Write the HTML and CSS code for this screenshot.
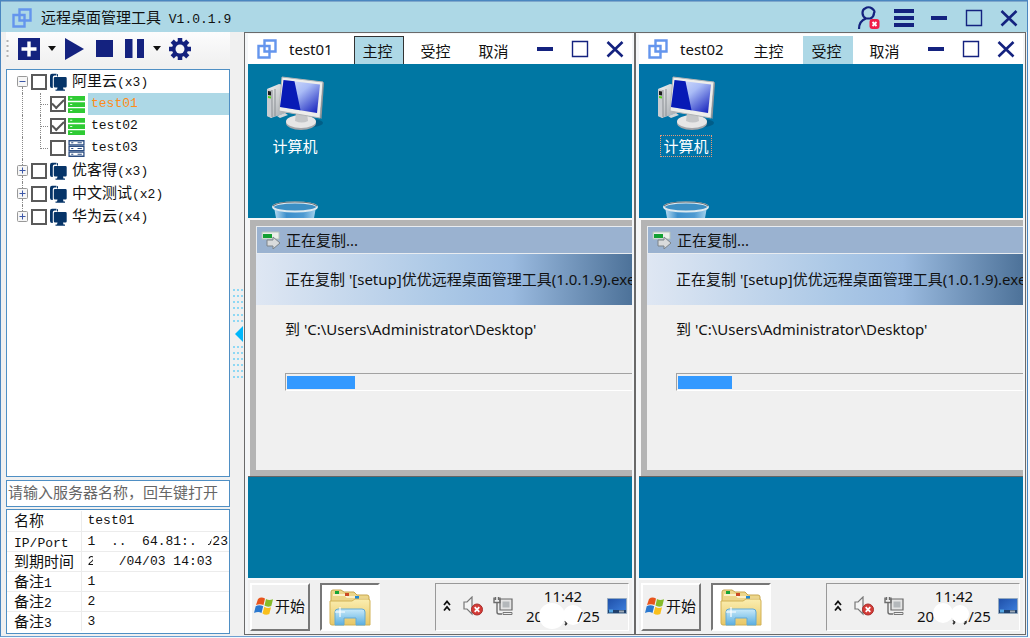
FILE: index.html
```
<!DOCTYPE html>
<html lang="zh-CN">
<head>
    <meta charset="UTF-8">
    <meta name="viewport" content="width=device-width, initial-scale=1.0">
    <title>远程桌面管理工具</title>
    <link rel="stylesheet" href="styles.css">
</head>
<body>
    <!-- Shared icons -->
    <svg class="sprite" aria-hidden="true">
        <defs>
            <linearGradient id="g-screen" x1="0" y1="0" x2="1" y2="1">
                <stop offset="0" stop-color="#e4ecff"/><stop offset=".45" stop-color="#a9bbf6"/><stop offset="1" stop-color="#0a16b8"/>
            </linearGradient>
            <linearGradient id="g-case" x1="0" y1="0" x2="1" y2="1">
                <stop offset="0" stop-color="#f4f4f4"/><stop offset="1" stop-color="#9aa0a6"/>
            </linearGradient>
            <linearGradient id="g-folder" x1="0" y1="0" x2="0" y2="1">
                <stop offset="0" stop-color="#fbeeb0"/><stop offset="1" stop-color="#e8c766"/>
            </linearGradient>
            <linearGradient id="g-tray" x1="0" y1="0" x2="0" y2="1">
                <stop offset="0" stop-color="#c9eafa"/><stop offset="1" stop-color="#5aaee0"/>
            </linearGradient>
            <linearGradient id="g-bin" x1="0" y1="0" x2="1" y2="0">
                <stop offset="0" stop-color="#b8dcf2"/><stop offset=".3" stop-color="#3c8fcb"/><stop offset=".7" stop-color="#4d9ad2"/><stop offset="1" stop-color="#a5d2ec"/>
            </linearGradient>
            <linearGradient id="g-blue" x1="0" y1="0" x2="1" y2="1">
                <stop offset="0" stop-color="#1f4fa8"/><stop offset="1" stop-color="#3f83e0"/>
            </linearGradient>
        </defs>
        <symbol id="i-logo" viewBox="0 0 20 20">
            <path d="M7.5 1.5h11v11h-11zM1.500 7h11v11.500h-11z" fill="none" stroke="#6495ed" stroke-width="2.4"/>
        </symbol>
        <symbol id="i-min" viewBox="0 0 18 18"><path d="M1 7h16v4H1z" fill="#14227f"/></symbol>
        <symbol id="i-max" viewBox="0 0 18 18"><path d="M1.5 1.5h15v15h-15z" fill="none" stroke="#14227f" stroke-width="1.4"/></symbol>
        <symbol id="i-close" viewBox="0 0 18 18"><path d="M1.5 2l15 14.5M16.5 2l-15 14.5" stroke="#14227f" stroke-width="2.6"/></symbol>
        <symbol id="i-caret" viewBox="0 0 8 5"><path d="M0 0h8L4 5z" fill="#111"/></symbol>
        <symbol id="i-plus-box" viewBox="0 0 11 11">
            <rect x=".5" y=".5" width="10" height="10" rx="1" fill="#f6f6f6" stroke="#989898"/>
            <path d="M2.5 5.5h6M5.5 2.5v6" stroke="#3d58a8"/>
        </symbol>
        <symbol id="i-minus-box" viewBox="0 0 11 11">
            <rect x=".5" y=".5" width="10" height="10" rx="1" fill="#f6f6f6" stroke="#989898"/>
            <path d="M2.5 5.5h6" stroke="#3d58a8"/>
        </symbol>
        <symbol id="i-group" viewBox="0 0 18 18">
            <path d="M1 3Q1 .8 3 .8h4.500v1.700H5.500Q3.800 2.500 3.800 4.500V15H3Q1 15 1 13z" fill="#063468"/>
            <path d="M8.500 1.200v2.300" stroke="#063468"/>
            <path d="M6 4h10.500q1.200 0 1.200 1.200v8q0 1.200-1.200 1.200H14l.5 2H16v1.300H6.500v-1.300H8l.5-2H6q-1.200 0-1.200-1.200v-8Q4.800 4 6 4z" fill="#063468"/>
        </symbol>
        <symbol id="i-on" viewBox="0 0 16 16">
            <path d="M0 0h16v4.500H0zM0 5.800h16v4.500H0zM0 11.500h16V16H0z" fill="#2fcb34"/>
            <path d="M2 2.200h2M2 8h2M2 13.700h2" stroke="#e4ffe4"/>
        </symbol>
        <symbol id="i-off" viewBox="0 0 16 16">
            <path d="M1 .7h14v3.800H1zM1 6.100h14v3.800H1zM1 11.500h14v3.800H1z" fill="#fff" stroke="#2b4d82" stroke-width="1.200"/>
            <path d="M3 2.600h2M9 2.600h4M3 8h2M9 8h4M3 13.400h2M9 13.400h4" stroke="#2b4d82"/>
        </symbol>
        <symbol id="i-computer" viewBox="0 0 60 56">
            <ellipse cx="46" cy="47" rx="12" ry="4" fill="#004f74" opacity=".6"/>
            <path d="M2 13l12-5 10 2v26L6 42l-4-2z" fill="url(#g-case)"/>
            <path d="M2 13l5 1v28l-5-2z" fill="#c9ccd0"/>
            <path d="M7 14v27M10 13v27" stroke="#8a8f94"/>
            <path d="M3 15l3 .5v4L3 19z" fill="#1c1c1c"/>
            <path d="M3 20l3 .5v2L3 22z" fill="#58d31c"/>
            <path d="M12 40l8-3 3 2-8 3z" fill="#d4d6d8"/>
            <ellipse cx="36" cy="47" rx="15" ry="7" fill="#a3a6aa"/>
            <ellipse cx="36" cy="45.500" rx="15" ry="6.500" fill="#e6e6e6"/>
            <path d="M31 37h11l1 8q-6 3-13 0z" fill="#c4c6c8"/>
            <path d="M17 1l41 5-3 36-41-7z" fill="#ededeb" stroke="#b2b4b6"/>
            <path d="M18.500 4l36.500 4.500-3 28.500L15 31z" fill="url(#g-screen)"/>
            <path d="M18.500 4l11 1.300 6 29L15 31z" fill="#071ab6"/>
            <path d="M55 42l3-36 1 1-2.500 36z" fill="#8f9498"/>
        </symbol>
        <symbol id="i-bin" viewBox="0 0 48 17">
            <path d="M3 6h42l-2 11H5z" fill="url(#g-bin)"/>
            <ellipse cx="24" cy="6" rx="22" ry="4.500" fill="#3c8fc4" stroke="#dce9f0" stroke-width="2"/>
            <path d="M2 5q4-4 22-4t22 4" fill="none" stroke="#6c7479" stroke-width="1.200"/>
        </symbol>
        <symbol id="i-copy" viewBox="0 0 20 18">
            <path d="M1 1h17v7H1z" fill="#e9efe9" stroke="#b5c4ba"/>
            <path d="M2 3h9v4H2z" fill="#12a032"/>
            <path d="M6 9h6V6l7 6-7 6v-3H6z" fill="#d9dbdc" stroke="#7c8388"/>
        </symbol>
        <symbol id="i-win" viewBox="0 0 20 18">
            <path d="M4 2q3-2.500 7-.5L9.500 8Q6 6.300 2 8z" fill="#e8541c"/>
            <path d="M12 2q3 2 7 .3L17.300 9Q13.500 10.500 10.500 8.500z" fill="#86bb28"/>
            <path d="M1.700 9.200q3.500-1.800 7.500 0L7.500 16Q4.500 14 0 16z" fill="#2a78cf"/>
            <path d="M10.300 9.700q3.200 2 6.700.6L15.300 17q-3.500 1.600-6.800-.5z" fill="#f9bf1c"/>
        </symbol>
        <symbol id="i-folder" viewBox="0 0 42 38">
            <path d="M2 36V4q0-2 2-2h8l3 2h10l3 3h10q2 0 2 2v27z" fill="#ecd68a" stroke="#c8a750"/>
            <path d="M4 7h12l2 2h10l2 2h9" fill="none" stroke="#fff9dd" stroke-width="1.500"/>
            <path d="M6 3h4v3H6z" fill="#17a437"/><path d="M16 5h4v3h-4z" fill="#cc4a25"/><path d="M26 8h4v3h-4z" fill="#1f87d2"/>
            <path d="M1 13h22l3-2h13q2 0 2 2v24H3q-2 0-2-2z" fill="url(#g-folder)" stroke="#d2b155"/>
            <path d="M6 37V24q0-3 3-3h24q3 0 3 3v13h-9v-7H15v7z" fill="url(#g-tray)" stroke="#62aad6"/>
            <path d="M11 19v10M6 24h10" stroke="#fff" stroke-width="1.200"/>
        </symbol>
        <symbol id="i-up" viewBox="0 0 8 12"><path d="M1 5l3-3.500L7 5M1 10.500L4 7l3 3.500" fill="none" stroke="#111" stroke-width="1.800"/></symbol>
        <symbol id="i-sound" viewBox="0 0 20 20">
            <path d="M1 6h3l5-5v17l-5-5H1z" fill="#f4f4f4" stroke="#777" stroke-width="1.200"/>
            <circle cx="14" cy="13.500" r="5.500" fill="#d43c38" stroke="#a82f2c"/>
            <path d="M11.700 11.200l4.600 4.600m0-4.600l-4.600 4.600" stroke="#fff" stroke-width="1.800"/>
        </symbol>
        <symbol id="i-net" viewBox="0 0 20 20">
            <path d="M7 3h12v11H7z" fill="#e4e4e4" stroke="#686868" stroke-width="1.200"/>
            <path d="M9.500 5.500h7v6h-7z" fill="#b4b8bb"/>
            <path d="M10 16.500h9v2h-9z" fill="#eee" stroke="#777"/>
            <path d="M1 1.500v5h6v-5M2.500 1v3M5.500 1v3M4 6.500V16q0 2 2 2h3" fill="none" stroke="#6c6c6c" stroke-width="1.400"/>
        </symbol>
        <symbol id="i-show" viewBox="0 0 20 16">
            <path d="M.5.5h19v15H.5z" fill="url(#g-blue)" stroke="#93a9bf"/>
            <path d="M1 12h18v3H1z" fill="#20406c"/>
            <path d="M2 11.500h4v3H2z" fill="#55a7e4"/><path d="M12 12.500h5v2h-5z" fill="#9faab5"/>
        </symbol>
    </svg>

    <div class="window">
        <header class="titlebar">
            <svg class="logo"><use href="#i-logo"/></svg>
            <h1 class="app-name">远程桌面管理工具<span class="mono"> V1.0.1.9</span></h1>
            <div class="title-buttons">
                <button class="icon-btn" aria-label="用户">
                    <svg width="24" height="24" viewBox="0 0 24 24">
                        <path d="M2 23q0-8 7-10.500Q5.500 10.500 5.500 7T8 2.500Q11.500 0 15 2.500T17 7q0 3.500-3.500 5.500H9" fill="none" stroke="#14227f" stroke-width="2.200"/>
                        <rect x="12.500" y="13" width="10" height="10" rx="3" fill="#f01e48"/>
                        <path d="M15.500 16l4 4m0-4l-4 4" stroke="#fff" stroke-width="1.800"/>
                    </svg>
                </button>
                <button class="icon-btn" aria-label="菜单">
                    <svg width="20" height="18" viewBox="0 0 20 18"><path d="M0 0h20v4H0zM0 7h20v4H0zM0 14h20v4H0z" fill="#14227f"/></svg>
                </button>
                <button class="icon-btn" aria-label="最小化"><svg class="glyph"><use href="#i-min"/></svg></button>
                <button class="icon-btn" aria-label="最大化"><svg class="glyph"><use href="#i-max"/></svg></button>
                <button class="icon-btn" aria-label="关闭"><svg class="glyph"><use href="#i-close"/></svg></button>
            </div>
        </header>

        <div class="main">
            <aside class="sidebar">
                <div class="toolbar">
                    <svg width="3" height="20" viewBox="0 0 3 20"><path d="M1.500 1v18" stroke="#b2b2b2" stroke-width="2" stroke-dasharray="2 3"/></svg>
                    <button class="tool tool-add" aria-label="添加">
                        <svg width="22" height="22" viewBox="0 0 22 22"><path d="M0 0h22v22H0z" fill="#14227f"/><path d="M11 3.500v15M3.500 11h15" stroke="#fff" stroke-width="3.400"/></svg>
                    </button>
                    <button class="tool" aria-label="更多添加"><svg class="caret"><use href="#i-caret"/></svg></button>
                    <button class="tool tool-add" aria-label="启动">
                        <svg width="19" height="22" viewBox="0 0 19 22"><path d="M0 0l19 11L0 22z" fill="#14227f"/></svg>
                    </button>
                    <button class="tool tool-stop" aria-label="停止">
                        <svg width="17" height="17" viewBox="0 0 17 17"><path d="M0 0h17v17H0z" fill="#14227f"/></svg>
                    </button>
                    <button class="tool tool-stop" aria-label="暂停">
                        <svg width="19" height="19" viewBox="0 0 19 19"><path d="M0 0h7.500v19H0zM12 0h7v19h-7z" fill="#14227f"/></svg>
                    </button>
                    <button class="tool tool-add" aria-label="更多暂停"><svg class="caret"><use href="#i-caret"/></svg></button>
                    <button class="tool" aria-label="设置">
                        <svg width="22" height="22" viewBox="0 0 22 22">
                            <g stroke="#14227f" stroke-width="4.500"><path d="M11 0v22M0 11h22M3.200 3.200l15.600 15.600M18.800 3.200L3.200 18.800"/></g>
                            <circle cx="11" cy="11" r="8" fill="#14227f"/><circle cx="11" cy="11" r="4.500" fill="#f7f7f8"/>
                        </svg>
                    </button>
                </div>

                <ul class="tree">
                    <li class="row">
                        <button class="expander stem-down" aria-label="折叠"><svg class="box"><use href="#i-minus-box"/></svg></button>
                        <label class="node"><input type="checkbox"><svg class="group"><use href="#i-group"/></svg><span class="text">阿里云<span class="mono">(x3)</span></span></label>
                    </li>
                    <li class="row child">
                        <span class="stem"></span><span class="branch"></span>
                        <label class="node"><input type="checkbox" checked><svg class="server"><use href="#i-on"/></svg><span class="text mono selected">test01</span></label>
                    </li>
                    <li class="row child">
                        <span class="stem"></span><span class="branch"></span>
                        <label class="node"><input type="checkbox" checked><svg class="server"><use href="#i-on"/></svg><span class="text mono">test02</span></label>
                    </li>
                    <li class="row child last">
                        <span class="stem"></span><span class="branch"></span>
                        <label class="node"><input type="checkbox"><svg class="server"><use href="#i-off"/></svg><span class="text mono">test03</span></label>
                    </li>
                    <li class="row">
                        <button class="expander stem-up stem-down" aria-label="展开"><svg class="box"><use href="#i-plus-box"/></svg></button>
                        <label class="node"><input type="checkbox"><svg class="group"><use href="#i-group"/></svg><span class="text">优客得<span class="mono">(x3)</span></span></label>
                    </li>
                    <li class="row">
                        <button class="expander stem-up stem-down" aria-label="展开"><svg class="box"><use href="#i-plus-box"/></svg></button>
                        <label class="node"><input type="checkbox"><svg class="group"><use href="#i-group"/></svg><span class="text">中文测试<span class="mono">(x2)</span></span></label>
                    </li>
                    <li class="row">
                        <button class="expander stem-up" aria-label="展开"><svg class="box"><use href="#i-plus-box"/></svg></button>
                        <label class="node"><input type="checkbox"><svg class="group"><use href="#i-group"/></svg><span class="text">华为云<span class="mono">(x4)</span></span></label>
                    </li>
                </ul>

                <input class="search" type="text" aria-label="服务器名称" placeholder="请输入服务器名称，回车键打开">

                <div class="details">
                    <table>
                        <tr><th scope="row">名称</th><td>test01</td></tr>
                        <tr><th scope="row"><span class="mono">IP/Port</span></th><td>1  ..  64.81:. <span class="cut">9</span>23</td></tr>
                        <tr><th scope="row">到期时间</th><td><span class="cut-right">2</span>   /04/03 14:03</td></tr>
                        <tr><th scope="row">备注<span class="mono">1</span></th><td>1</td></tr>
                        <tr><th scope="row">备注<span class="mono">2</span></th><td>2</td></tr>
                        <tr><th scope="row">备注<span class="mono">3</span></th><td>3</td></tr>
                    </table>
                </div>
            </aside>

            <button class="splitter" aria-label="收起侧栏">
                <svg width="11" height="90" viewBox="0 0 11 90">
                    <g stroke="#6fd0f5" stroke-width="1.500" stroke-dasharray="2 2">
                        <path d="M0 1h10M0 7h10M0 13h10M0 19h10M0 26h10M0 32h10M0 58h10M0 64h10M0 70h10M0 76h10M0 82h10M0 88h10"/>
                    </g>
                    <path d="M2 45l8-8v16z" fill="#00b7fb"/>
                </svg>
            </button>

            <section class="panel">
                <div class="panel-head">
                    <svg class="logo"><use href="#i-logo"/></svg>
                    <h2 class="panel-name">test01</h2>
                    <div class="tabs">
                        <button class="tab active focused">主控</button>
                        <button class="tab">受控</button>
                        <button class="tab">取消</button>
                    </div>
                    <div class="panel-buttons">
                        <button class="icon-btn" aria-label="最小化"><svg class="glyph"><use href="#i-min"/></svg></button>
                        <button class="icon-btn" aria-label="最大化"><svg class="glyph"><use href="#i-max"/></svg></button>
                        <button class="icon-btn" aria-label="关闭"><svg class="glyph"><use href="#i-close"/></svg></button>
                    </div>
                </div>
                <div class="desktop">
                    <div class="desk-icons">
                        <svg class="computer"><use href="#i-computer"/></svg>
                        <span class="desk-label">计算机</span>
                        <svg class="bin"><use href="#i-bin"/></svg>
                    </div>
                    <div class="dialog">
                        <div class="dialog-inner">
                            <div class="dialog-title"><svg class="copy"><use href="#i-copy"/></svg>正在复制...</div>
                            <p class="dialog-file">正在复制 '[setup]优优远程桌面管理工具(1.0.1.9).exe'</p>
                            <div class="dialog-body">
                                <p class="dialog-path">到 'C:\Users\Administrator\Desktop'</p>
                                <div class="progress" role="progressbar" aria-label="复制进度"><div class="bar" style="width: 68px"></div></div>
                            </div>
                        </div>
                    </div>
                    <div class="taskbar">
                        <button class="start"><svg class="win"><use href="#i-win"/></svg>开始</button>
                        <button class="task" aria-label="文件夹"><svg class="folder"><use href="#i-folder"/></svg></button>
                        <div class="tray">
                            <svg class="up"><use href="#i-up"/></svg>
                            <svg class="tray-icon"><use href="#i-sound"/></svg>
                            <svg class="tray-icon net"><use href="#i-net"/></svg>
                            <div class="clock">
                                <span>11:42</span>
                                <span class="date">20<svg class="blot" viewBox="0 0 44 28"><path d="M27 19q3 2 0 4" fill="none" stroke="#333" stroke-width="2"/><circle cx="14" cy="14" r="13" fill="#fff"/><circle cx="35" cy="13" r="10" fill="#fff"/></svg>/25</span>
                            </div>
                            <svg class="show"><use href="#i-show"/></svg>
                        </div>
                    </div>
                </div>
            </section>

            <section class="panel alt">
                <div class="panel-head">
                    <svg class="logo"><use href="#i-logo"/></svg>
                    <h2 class="panel-name">test02</h2>
                    <div class="tabs">
                        <button class="tab">主控</button>
                        <button class="tab active">受控</button>
                        <button class="tab">取消</button>
                    </div>
                    <div class="panel-buttons">
                        <button class="icon-btn" aria-label="最小化"><svg class="glyph"><use href="#i-min"/></svg></button>
                        <button class="icon-btn" aria-label="最大化"><svg class="glyph"><use href="#i-max"/></svg></button>
                        <button class="icon-btn" aria-label="关闭"><svg class="glyph"><use href="#i-close"/></svg></button>
                    </div>
                </div>
                <div class="desktop">
                    <div class="desk-icons">
                        <svg class="computer"><use href="#i-computer"/></svg>
                        <span class="desk-label picked">计算机</span>
                        <svg class="bin"><use href="#i-bin"/></svg>
                    </div>
                    <div class="dialog">
                        <div class="dialog-inner">
                            <div class="dialog-title"><svg class="copy"><use href="#i-copy"/></svg>正在复制...</div>
                            <p class="dialog-file">正在复制 '[setup]优优远程桌面管理工具(1.0.1.9).exe'</p>
                            <div class="dialog-body">
                                <p class="dialog-path">到 'C:\Users\Administrator\Desktop'</p>
                                <div class="progress" role="progressbar" aria-label="复制进度"><div class="bar" style="width: 54px"></div></div>
                            </div>
                        </div>
                    </div>
                    <div class="taskbar">
                        <button class="start"><svg class="win"><use href="#i-win"/></svg>开始</button>
                        <button class="task" aria-label="文件夹"><svg class="folder"><use href="#i-folder"/></svg></button>
                        <div class="tray">
                            <svg class="up"><use href="#i-up"/></svg>
                            <svg class="tray-icon"><use href="#i-sound"/></svg>
                            <svg class="tray-icon net"><use href="#i-net"/></svg>
                            <div class="clock">
                                <span>11:42</span>
                                <span class="date">20<svg class="blot" viewBox="0 0 44 28"><path d="M24 18q3 2 0 4M35 18q4 2 0 4" fill="none" stroke="#333" stroke-width="2"/><circle cx="14" cy="11" r="10" fill="#fff"/><circle cx="31" cy="12" r="9" fill="#fff"/></svg>/25</span>
                            </div>
                            <svg class="show"><use href="#i-show"/></svg>
                        </div>
                    </div>
                </div>
            </section>
        </div>
    </div>
</body>
</html>
```
FILE: styles.css
```
* {
    box-sizing: border-box;
}
body {
    margin: 0;
    padding: 0 2px 1px 0;
    height: 100vh;
    background: #f4f8fc;
    color: #111;
    font-family: "Noto Sans", "Noto Sans CJK SC", sans-serif;
    font-size: 15px;
    line-height: 20px;
}
button {
    margin: 0;
    padding: 0;
    border: 0;
    background: none;
    color: inherit;
    font: inherit;
    cursor: pointer;
}
svg {
    display: block;
    flex: none;
}
h1, h2, p, ul {
    margin: 0;
    padding: 0;
    font-size: 15px;
    font-weight: 400;
}
.sprite {
    position: absolute;
    width: 0;
    height: 0;
}
.mono {
    font-family: "Liberation Mono", "Noto Sans CJK SC", monospace;
    font-size: 13px;
}

.window {
    height: 100%;
    display: flex;
    flex-direction: column;
    background: #f0f0f0;
    border: 1px solid #4a86c0;
    border-bottom-color: #6d9fd0;
}

/* Title bar */
.titlebar {
    flex: none;
    height: 31px;
    display: flex;
    align-items: center;
    padding: 2px 1px 0 11px;
    background: #add8e6;
    border-top: 1px solid #7fa8cc;
}
.logo {
    width: 20px;
    height: 20px;
}
.app-name {
    margin-left: 9px;
    white-space: nowrap;
}
.title-buttons {
    margin-left: auto;
    display: flex;
    align-items: center;
}
.icon-btn {
    width: 35px;
    height: 26px;
    display: flex;
    align-items: center;
    justify-content: center;
}
.glyph {
    width: 18px;
    height: 18px;
}

.main {
    flex: 1;
    min-height: 0;
    display: flex;
    padding: 0 1px 1px 0;
}

/* Sidebar */
.sidebar {
    flex: none;
    width: 229px;
    display: flex;
    flex-direction: column;
    padding: 0 0 1px 5px;
}
.toolbar {
    height: 33px;
    margin-bottom: 4px;
    display: flex;
    align-items: center;
    background: linear-gradient(#fcfcfd, #f0f0f0);
}
.tool {
    margin-left: 8px;
}
.tool-add {
    margin-left: 9px;
}
.tool-stop {
    margin-left: 12px;
}
.caret {
    width: 8px;
    height: 5px;
}
.tree,
.search,
.details {
    background: #fff;
    border: 1px solid #4f8fc4;
}
.tree {
    flex: 1;
    list-style: none;
    overflow: hidden;
}
.row {
    height: 23px;
    display: flex;
}
.child {
    height: 22px;
}
.node {
    flex: 1;
    display: flex;
    align-items: center;
}
.expander {
    width: 24px;
    display: flex;
    flex-direction: column;
    align-items: center;
    padding-left: 7px;
}
.expander::before,
.expander::after {
    content: "";
    flex: 1;
    border-left: 1px dotted transparent;
}
.stem-up::before,
.stem-down::after {
    border-left-color: #888;
}
.box {
    width: 11px;
    height: 11px;
}
.stem {
    width: 18px;
    margin-left: 15px;
    border-left: 1px dotted #888;
}
.branch {
    width: 9px;
    margin-right: 1px;
    border-left: 1px dotted #888;
    background: linear-gradient(90deg, #888 50%, transparent 50%) 0 11px / 2px 1px repeat-x;
}
.last .branch {
    height: 12px;
}
.row input {
    appearance: none;
    flex: none;
    width: 16px;
    height: 16px;
    margin: 0 2px 0 0;
    border: 2px solid #5a5a5a;
    background: #fff;
    display: grid;
    place-items: center;
}
.row input:checked::before {
    content: "";
    width: 10px;
    height: 5px;
    border: solid #555;
    border-width: 0 0 2px 2px;
    transform: rotate(-45deg);
    margin-bottom: 3px;
}
.group {
    width: 18px;
    height: 18px;
}
.server {
    width: 17px;
    height: 17px;
    margin-right: 3px;
}
.text {
    flex: 1;
    padding-left: 5px;
    line-height: 22px;
}
.child .text {
    padding-left: 3px;
}
.selected {
    background: #add8e6;
    color: #ff8c1a;
}
.search {
    height: 27px;
    margin: 3px 0 2px;
    padding: 0 1px 4px;
    font: inherit;
    outline: 0;
}
.search::placeholder {
    color: #666;
    opacity: 1;
}
.details {
    padding: 1px 0 2px;
}
.details table {
    width: 100%;
    border-collapse: collapse;
    table-layout: fixed;
}
.details th,
.details td {
    height: 20px;
    padding: 0 0 0 7px;
    border-bottom: 1px solid #ececec;
    font-weight: 400;
    line-height: 19px;
    text-align: left;
    vertical-align: top;
    white-space: pre;
}
.details th {
    width: 74px;
    border-right: 1px solid #ececec;
}
.details td {
    font-family: "Liberation Mono", monospace;
    font-size: 13px;
    padding-left: 6px;
}
.details .mono {
    line-height: 1;
}
.details tr:last-child > * {
    border-bottom: 0;
}
/* Partly masked digits */
.cut {
    background: linear-gradient(120deg, transparent 60%, #111 60%);
    background-clip: text;
    color: transparent;
}
.cut-right {
    background: linear-gradient(90deg, #111 65%, transparent 65%);
    background-clip: text;
    color: transparent;
}
.splitter {
    flex: none;
    width: 14px;
    display: flex;
    align-items: center;
    justify-content: flex-end;
}

/* Remote session panels */
.panel {
    flex: 1;
    min-width: 0;
    display: flex;
    flex-direction: column;
    border: 1px solid #6a6a6a;
    padding: 1px 2px 0 3px;
    background: #f4f6f8;
}
.panel-head {
    height: 30px;
    display: flex;
    align-items: center;
    padding: 0 0 0 9px;
    background: #fff;
}
.panel-name {
    width: 65px;
    margin-left: 12px;
}
.tabs {
    display: flex;
    align-self: flex-end;
    gap: 8px;
}
.tab {
    width: 50px;
    height: 28px;
    padding: 1px 3px 0 0;
    border: 1px solid transparent;
    border-bottom: 0;
}
.tab.active {
    background: #add8e6;
}
.tab.focused {
    border-color: #333;
}
.panel-buttons {
    margin-left: auto;
    display: flex;
}
.desktop {
    flex: 1;
    min-height: 0;
    display: flex;
    flex-direction: column;
    background: #0077a3;
}
.alt .desktop {
    background: #0074a8;
}
.desk-icons {
    width: 94px;
    height: 154px;
    display: flex;
    flex-direction: column;
    align-items: center;
    padding-top: 12px;
}
.computer {
    width: 60px;
    height: 56px;
}
.desk-label {
    margin-top: 3px;
    padding: 0 2px;
    border: 1px dotted transparent;
    color: #fff;
}
.picked {
    border-color: #e69a78;
}
.bin {
    width: 48px;
    height: 17px;
    margin-top: auto;
}
.dialog {
    padding: 2px 0 0 2px;
    background: #f6f6f6;
    border-bottom: 1px solid #666;
    overflow: hidden;
    white-space: nowrap;
}
.dialog-inner {
    border: solid #b4b4b4;
    border-width: 6px 0 6px 6px;
    background: #f0f0f0;
}
.dialog-title {
    height: 28px;
    display: flex;
    align-items: center;
    gap: 5px;
    padding-left: 4px;
    border: solid #e8ecf0;
    border-width: 1px 0 1px 1px;
    background: #9ab2d0;
}
.copy {
    width: 20px;
    height: 18px;
}
.dialog-file {
    height: 51px;
    padding-left: 29px;
    line-height: 50px;
    background: linear-gradient(90deg, #dfe7f3, #abc8e6 50%, #9bbbe0 68%, #4d7299);
}
.dialog-body {
    height: 165px;
    padding: 14px 0 0 29px;
}
.progress {
    height: 18px;
    margin-top: 34px;
    padding: 2px 0 1px 1px;
    border: solid #a2a2a2;
    border-width: 1px 0 0 1px;
    border-bottom: 1px solid #fff;
}
.bar {
    height: 100%;
    background: #3399ff;
}
.taskbar {
    height: 56px;
    margin-top: auto;
    display: flex;
    align-items: center;
    padding: 0 3px 1px 2px;
    border-top: 2px solid #f8f9fb;
    background: #f0f0f0;
}
.start,
.task {
    width: 60px;
    height: 48px;
    display: flex;
    align-items: center;
}
.start {
    gap: 1px;
    padding: 0 0 2px 2px;
    border: 2px solid;
    border-color: #fff #777 #777 #fff;
    white-space: nowrap;
}
.task {
    justify-content: center;
    margin-left: 10px;
    border: 2px solid;
    border-color: #777 #fff #fff #777;
    background: #fff;
}
.win {
    width: 20px;
    height: 18px;
}
.folder {
    width: 42px;
    height: 38px;
}
.tray {
    width: 194px;
    height: 48px;
    margin-left: auto;
    display: flex;
    align-items: center;
    padding: 0 1px 2px 7px;
    border: 1px solid;
    border-color: #999 #fff #fff #999;
}
.up {
    width: 8px;
    height: 12px;
}
.tray-icon {
    width: 20px;
    height: 20px;
    margin-left: 12px;
}
.net {
    margin-left: 10px;
}
.clock {
    flex: 1;
    display: flex;
    flex-direction: column;
    align-items: center;
    padding-left: 6px;
}
.date {
    display: flex;
}
.blot {
    width: 44px;
    height: 28px;
    margin: -4px -5px;
}
.show {
    width: 20px;
    height: 16px;
}
```
